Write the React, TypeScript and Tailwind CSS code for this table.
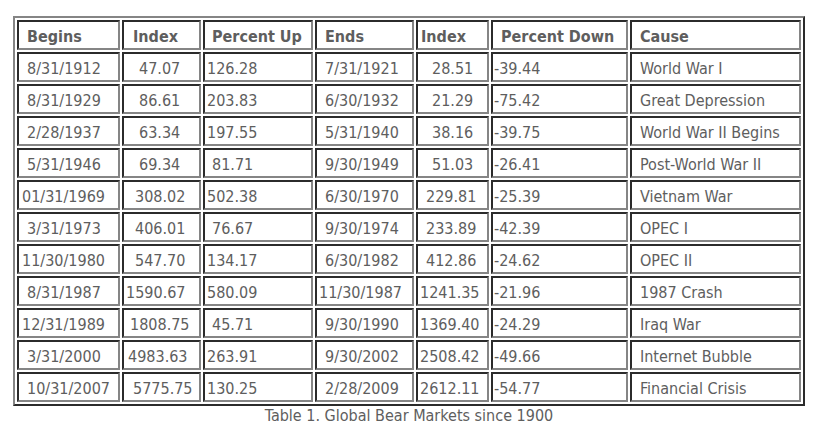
import React from "react";

type Cell = { t: string; p: string };

const widths = ["w-[103px]", "w-[79px]", "w-[110px]", "w-[99px]", "w-[73px]", "w-[137px]", "w-[171px]"];

const header: Cell[] = [
  { t: "Begins", p: "pl-[8px]" },
  { t: "Index", p: "pl-[9px]" },
  { t: "Percent Up", p: "pl-[7px]" },
  { t: "Ends", p: "pl-[8px]" },
  { t: "Index", p: "pl-[3px]" },
  { t: "Percent Down", p: "pl-[8px]" },
  { t: "Cause", p: "pl-[8px]" },
];

const rows: Cell[][] = [
  [
    { t: "8/31/1912", p: "pl-[8px]" },
    { t: "47.07", p: "pl-[15px]" },
    { t: "126.28", p: "pl-[2px]" },
    { t: "7/31/1921", p: "pl-[8px]" },
    { t: "28.51", p: "pl-[14px]" },
    { t: "-39.44", p: "pl-[1px]" },
    { t: "World War I", p: "pl-[8px]" },
  ],
  [
    { t: "8/31/1929", p: "pl-[8px]" },
    { t: "86.61", p: "pl-[15px]" },
    { t: "203.83", p: "pl-[2px]" },
    { t: "6/30/1932", p: "pl-[8px]" },
    { t: "21.29", p: "pl-[14px]" },
    { t: "-75.42", p: "pl-[1px]" },
    { t: "Great Depression", p: "pl-[8px]" },
  ],
  [
    { t: "2/28/1937", p: "pl-[8px]" },
    { t: "63.34", p: "pl-[15px]" },
    { t: "197.55", p: "pl-[2px]" },
    { t: "5/31/1940", p: "pl-[8px]" },
    { t: "38.16", p: "pl-[14px]" },
    { t: "-39.75", p: "pl-[1px]" },
    { t: "World War II Begins", p: "pl-[8px]" },
  ],
  [
    { t: "5/31/1946", p: "pl-[8px]" },
    { t: "69.34", p: "pl-[15px]" },
    { t: "81.71", p: "pl-[7px]" },
    { t: "9/30/1949", p: "pl-[8px]" },
    { t: "51.03", p: "pl-[14px]" },
    { t: "-26.41", p: "pl-[1px]" },
    { t: "Post-World War II", p: "pl-[8px]" },
  ],
  [
    { t: "01/31/1969", p: "pl-[3px]" },
    { t: "308.02", p: "pl-[11px]" },
    { t: "502.38", p: "pl-[2px]" },
    { t: "6/30/1970", p: "pl-[8px]" },
    { t: "229.81", p: "pl-[8px]" },
    { t: "-25.39", p: "pl-[1px]" },
    { t: "Vietnam War", p: "pl-[8px]" },
  ],
  [
    { t: "3/31/1973", p: "pl-[8px]" },
    { t: "406.01", p: "pl-[11px]" },
    { t: "76.67", p: "pl-[7px]" },
    { t: "9/30/1974", p: "pl-[8px]" },
    { t: "233.89", p: "pl-[8px]" },
    { t: "-42.39", p: "pl-[1px]" },
    { t: "OPEC I", p: "pl-[8px]" },
  ],
  [
    { t: "11/30/1980", p: "pl-[3px]" },
    { t: "547.70", p: "pl-[11px]" },
    { t: "134.17", p: "pl-[2px]" },
    { t: "6/30/1982", p: "pl-[8px]" },
    { t: "412.86", p: "pl-[8px]" },
    { t: "-24.62", p: "pl-[1px]" },
    { t: "OPEC II", p: "pl-[8px]" },
  ],
  [
    { t: "8/31/1987", p: "pl-[8px]" },
    { t: "1590.67", p: "pl-[2px]" },
    { t: "580.09", p: "pl-[2px]" },
    { t: "11/30/1987", p: "pl-[2px]" },
    { t: "1241.35", p: "pl-[2px]" },
    { t: "-21.96", p: "pl-[1px]" },
    { t: "1987 Crash", p: "pl-[8px]" },
  ],
  [
    { t: "12/31/1989", p: "pl-[3px]" },
    { t: "1808.75", p: "pl-[6px]" },
    { t: "45.71", p: "pl-[7px]" },
    { t: "9/30/1990", p: "pl-[8px]" },
    { t: "1369.40", p: "pl-[2px]" },
    { t: "-24.29", p: "pl-[1px]" },
    { t: "Iraq War", p: "pl-[8px]" },
  ],
  [
    { t: "3/31/2000", p: "pl-[8px]" },
    { t: "4983.63", p: "pl-[4px]" },
    { t: "263.91", p: "pl-[2px]" },
    { t: "9/30/2002", p: "pl-[8px]" },
    { t: "2508.42", p: "pl-[2px]" },
    { t: "-49.66", p: "pl-[1px]" },
    { t: "Internet Bubble", p: "pl-[8px]" },
  ],
  [
    { t: "10/31/2007", p: "pl-[8px]" },
    { t: "5775.75", p: "pl-[9px]" },
    { t: "130.25", p: "pl-[2px]" },
    { t: "2/28/2009", p: "pl-[8px]" },
    { t: "2612.11", p: "pl-[2px]" },
    { t: "-54.77", p: "pl-[1px]" },
    { t: "Financial Crisis", p: "pl-[8px]" },
  ],
];

const cellBase =
  "h-[30px] border-2 border-t-[#2b2b2b] border-l-[#2b2b2b] border-b-[#858585] border-r-[#858585] text-left align-middle whitespace-nowrap pt-[4px] pb-0 pr-0";

export default function App() {
  return (
    <div
      className="bg-white w-[839px] h-[440px] pl-[13px] pt-[16px] text-[#5e5e5e] text-[16px] leading-[18px]"
      style={{ fontFamily: '"DejaVu Sans Condensed", "DejaVu Sans", sans-serif' }}
    >
      <div className="w-[792px] flex flex-col items-center">
        <table className="table-fixed w-[792px] border-separate border-spacing-[2px] border-2 border-t-[#858585] border-l-[#858585] border-b-[#2b2b2b] border-r-[#2b2b2b]">
          <thead>
            <tr>
              {header.map((c, i) => (
                <th key={i} className={`${cellBase} ${widths[i]} ${c.p} font-bold`}>
                  {c.t}
                </th>
              ))}
            </tr>
          </thead>
          <tbody>
            {rows.map((r, ri) => (
              <tr key={ri}>
                {r.map((c, i) => (
                  <td key={i} className={`${cellBase} ${c.p}`}>
                    {c.t}
                  </td>
                ))}
              </tr>
            ))}
          </tbody>
        </table>
        <div className="mt-[1px] text-center">Table 1. Global Bear Markets since 1900</div>
      </div>
    </div>
  );
}
